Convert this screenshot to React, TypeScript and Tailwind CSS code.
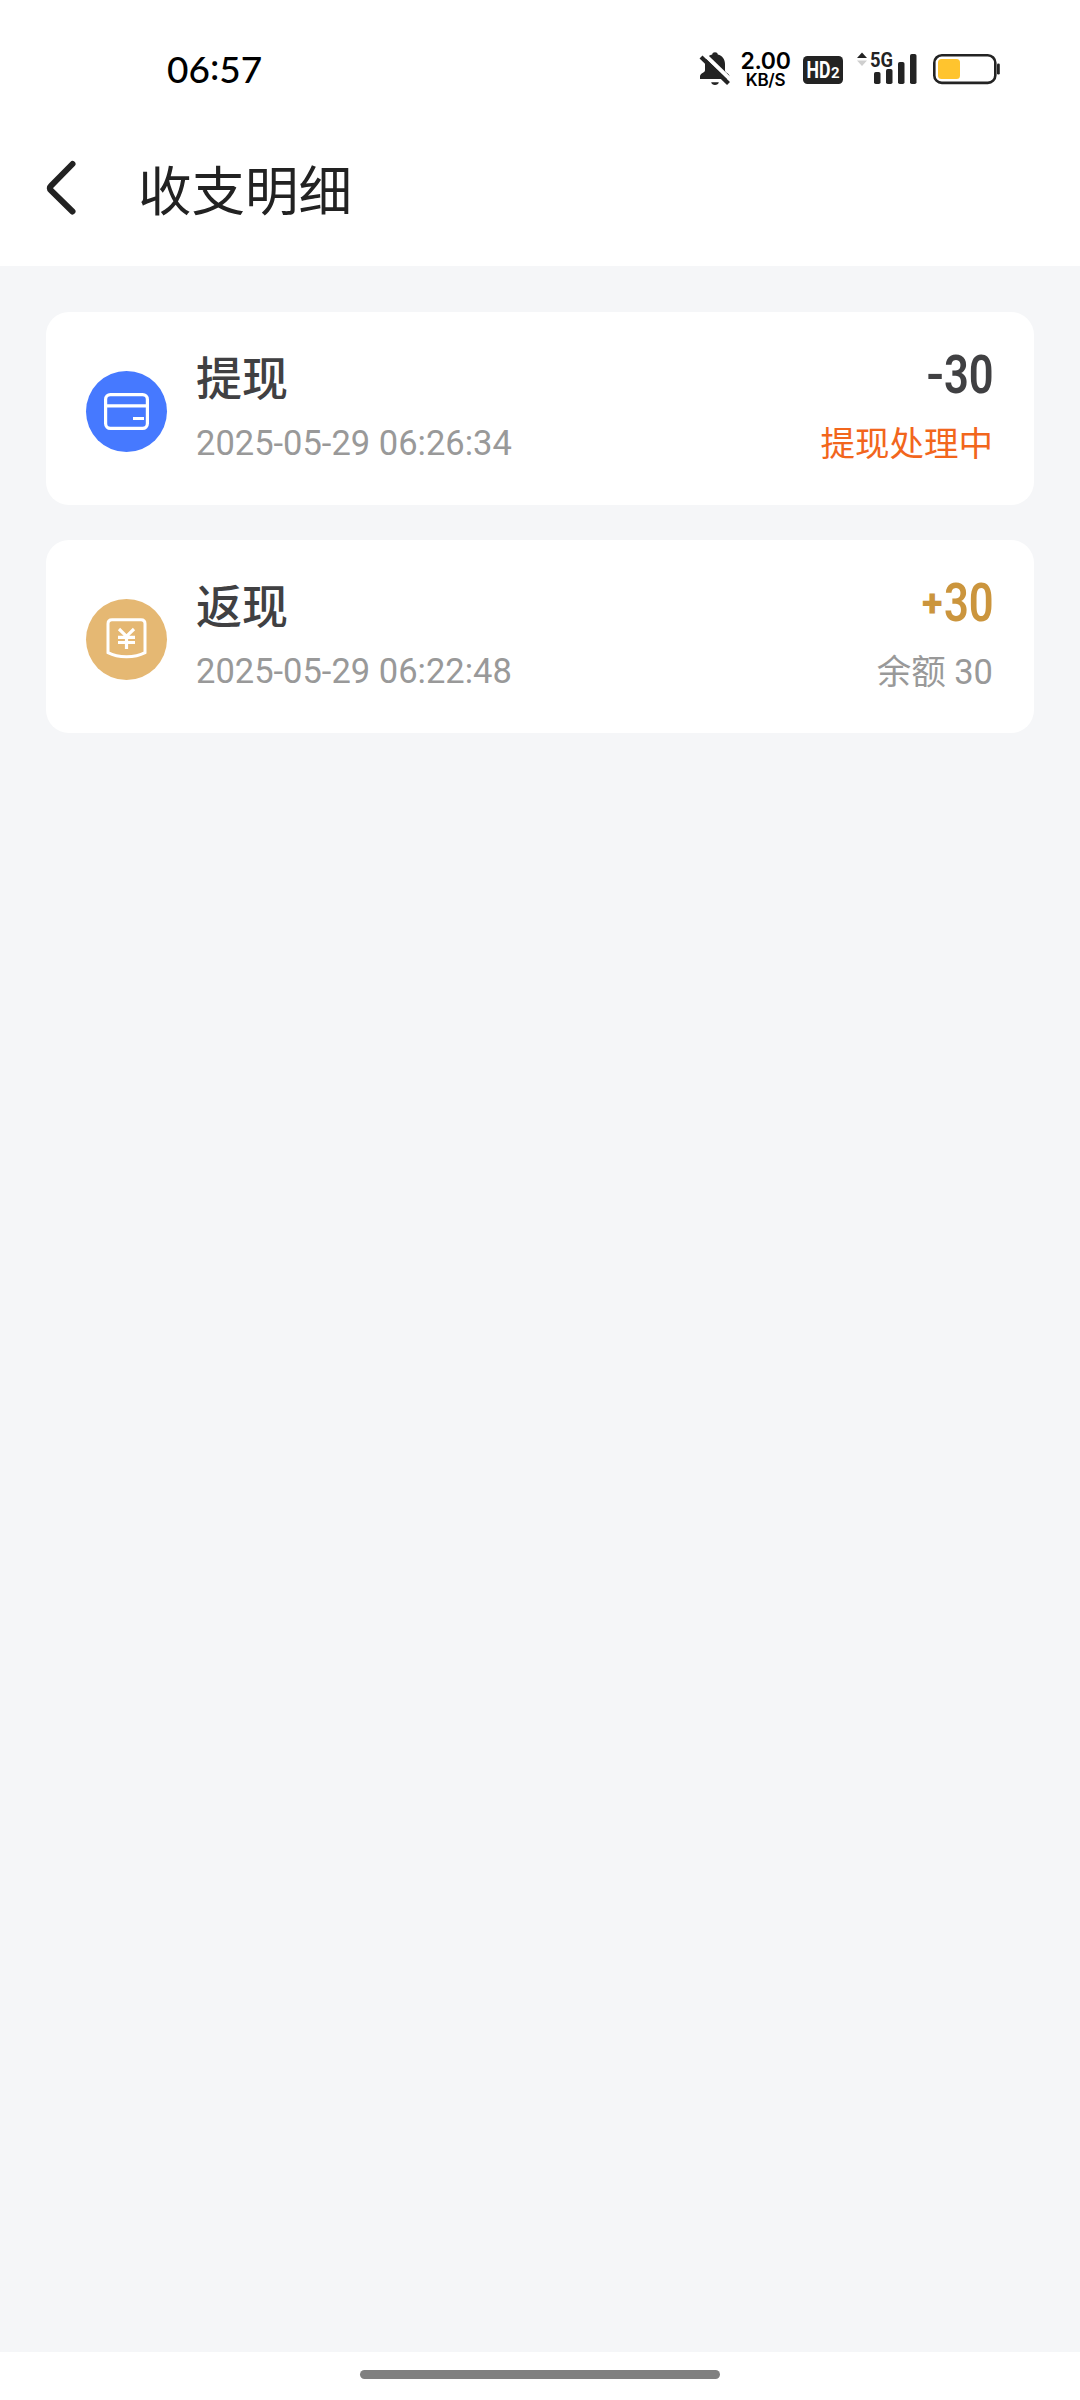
import React from 'react'
import clsx from 'clsx'

interface IRecord {
  type: 'withdraw' | 'cashback'
  title: string
  time: string
  sign: string
  amount: string
  note: string
}

const records: IRecord[] = [
  {
    type: 'withdraw',
    title: '提现',
    time: '2025-05-29 06:26:34',
    sign: '-',
    amount: '30',
    note: '提现处理中',
  },
  {
    type: 'cashback',
    title: '返现',
    time: '2025-05-29 06:22:48',
    sign: '+',
    amount: '30',
    note: '余额 30',
  },
]

const BellOffIcon: React.FC = () => (
  <svg width="34" height="36" viewBox="0 0 34 36" fill="none">
    <path
      d="M16 1.2c1.6 0 2.6.9 2.8 2.2 4.6 1.2 7.2 4.8 7.2 9.6v6.2c0 1.5 1 2 2.8 3.2 1.2.9 1.7 1.8 1.7 3V28H1v-2.6c0-1.2.5-2.1 1.7-3C4.5 21.2 6 20.7 6 19.2V13c0-4.8 2.6-8.4 7.2-9.6.2-1.3 1.2-2.2 2.8-2.2Z"
      fill="#232323"
    />
    <path d="M12.2 31.3h7.6c-.3 1.7-1.8 2.6-3.8 2.6s-3.5-.9-3.8-2.6Z" fill="#232323" />
    <path d="M4.7 2.7 33 30" stroke="#fff" strokeWidth="4" />
    <path d="M2 6 29.5 32.6" stroke="#232323" strokeWidth="4.2" />
  </svg>
)

const SignalIcon: React.FC = () => (
  <svg className="overflow-visible" width="62" height="36" viewBox="0 0 62 36">
    <path d="M5 1.5 10 7H0Z" fill="#232323" />
    <path d="M5 15 0 9.5h10Z" fill="#cfcfcf" />
    <text
      x="13"
      y="16"
      textLength="23"
      lengthAdjust="spacingAndGlyphs"
      className="font-['Roboto',sans-serif] text-[21px] font-bold"
      fill="#232323"
    >
      5G
    </text>
    <rect x="17" y="21" width="6.5" height="12" rx="1.8" fill="#232323" />
    <rect x="29" y="18" width="6.5" height="15" rx="1.8" fill="#232323" />
    <rect x="41" y="11" width="6.5" height="22" rx="1.8" fill="#232323" />
    <rect x="53" y="3" width="6.5" height="30" rx="1.8" fill="#232323" />
  </svg>
)

const HdBadge: React.FC = () => (
  <svg width="40" height="28" viewBox="0 0 40 28">
    <rect width="40" height="28" rx="4.5" fill="#232323" />
    <g className="font-['Roboto',sans-serif] font-bold" fill="#fff">
      <text x="3.5" y="22" textLength="24" lengthAdjust="spacingAndGlyphs" className="text-[23px]">
        HD
      </text>
      <text x="28" y="22" className="text-[15px]">
        2
      </text>
    </g>
  </svg>
)

const BatteryIcon: React.FC = () => (
  <svg width="68" height="32" viewBox="0 0 68 32" fill="none">
    <rect x="1.3" y="2.3" width="61" height="27.6" rx="7.5" stroke="#232323" strokeWidth="2.6" />
    <rect x="5" y="6" width="22" height="20" rx="3.5" fill="#ffc42e" />
    <rect x="64" y="10.5" width="2.8" height="11" rx="1.3" fill="#232323" />
  </svg>
)

const CardIcon: React.FC = () => (
  <svg width="81" height="81" viewBox="0 0 81 81" fill="none" stroke="#fff" strokeWidth="3.2">
    <rect x="19.6" y="23.6" width="41.8" height="33.8" rx="4.8" />
    <path d="M19.6 34.8h41.8M47 47.5h11" />
  </svg>
)

const YuanIcon: React.FC = () => (
  <svg width="81" height="81" viewBox="0 0 81 81" fill="none" stroke="#fff" strokeWidth="3">
    <path d="M26 20.7h29c2.4 0 4 1.6 4 4v28.9c-5 2.7-11.2 4.1-18.5 4.1S27 56.3 22 53.6V24.7c0-2.4 1.6-4 4-4Z" />
    <path d="m33 30 7.5 7.3L48 30M32 38.3h17M32 43.5h17M40.5 37v13" strokeWidth="3.2" />
  </svg>
)

const StatusBar: React.FC = () => (
  <div className="flex h-[138px] items-start pr-[79px] pl-[167px] text-black">
    <div className="mt-[46px] flex font-['Lato',sans-serif] text-[37px] leading-[45px] font-medium">
      06<span className="relative -top-[3px]">:</span>57
    </div>
    <div className="ml-auto flex items-start">
      <div className="mt-[51px]">
        <BellOffIcon />
      </div>
      <div className="mt-[50px] ml-[7px] w-[51px] text-center font-['Inter',sans-serif] font-semibold">
        <div className="text-[23px] leading-[22px] tracking-[-0.3px]">2.00</div>
        <div className="text-[17px] leading-[17px] tracking-[-0.3px]">KB/S</div>
      </div>
      <div className="mt-[56px] ml-[12px]">
        <HdBadge />
      </div>
      <div className="mt-[51px] ml-[14px]">
        <SignalIcon />
      </div>
      <div className="mt-[53px] ml-[14px]">
        <BatteryIcon />
      </div>
    </div>
  </div>
)

const RecordCard: React.FC<{ record: IRecord }> = ({ record }) => {
  const isWithdraw = record.type === 'withdraw'

  return (
    <div className="flex h-[193px] items-start rounded-[23px] bg-white pr-[41px] pl-[40px]">
      <div
        className={clsx(
          'mt-[59px] size-[81px] rounded-full',
          isWithdraw ? 'bg-[#4679ff]' : 'bg-[#e5b873]',
        )}
      >
        {isWithdraw ? <CardIcon /> : <YuanIcon />}
      </div>
      <div className="mt-[37px] ml-[29px]">
        <div className="text-[46px] leading-[60px] font-medium text-[#404042]">{record.title}</div>
        <div className="mt-[13px] text-[34.5px] leading-[42px] text-[#999]">{record.time}</div>
      </div>
      <div className="mt-[33px] ml-auto flex flex-col items-end">
        <div
          className={clsx(
            'mr-[-1px] flex items-center text-[53px] leading-[60px] font-semibold',
            isWithdraw ? 'text-[#404042]' : 'text-[#cb953d]',
          )}
        >
          {isWithdraw ? (
            <span className="mr-[-11px] text-[50px]">{record.sign}</span>
          ) : (
            <span className="mr-[-9px] text-[38px] font-extrabold">{record.sign}</span>
          )}
          <span className="origin-right scale-x-[0.82]">{record.amount}</span>
        </div>
        <div
          className={clsx(
            'mt-[18px] text-[34.5px] leading-[42px]',
            isWithdraw ? 'text-[#f2661c]' : 'text-[#999]',
          )}
        >
          {record.note}
        </div>
      </div>
    </div>
  )
}

const App: React.FC = () => {
  return (
    <div className="flex h-[2400px] w-[1080px] flex-col bg-white font-['Roboto','Noto_Sans_CJK_SC',sans-serif]">
      <StatusBar />
      <header className="flex h-[128px] items-start pl-[46px]">
        <svg className="mt-[21px]" width="32" height="58" viewBox="0 0 32 58" fill="none">
          <path
            d="M26.5 5 5.2 26.7c-1.6 1.6-1.6 3.4 0 5L26.5 52.5"
            stroke="#222"
            strokeWidth="6"
            strokeLinecap="round"
          />
        </svg>
        <h1 className="mt-[15px] ml-[60px] text-[53.5px] leading-[80px] text-[#222]">收支明细</h1>
      </header>
      <main className="flex flex-1 flex-col gap-[35px] bg-[#f5f6f8] px-[46px] pt-[46px]">
        {records.map((record) => (
          <RecordCard key={record.time} record={record} />
        ))}
      </main>
      <footer className="flex h-[48px] justify-center pt-[18px]">
        <div className="h-[9px] w-[360px] rounded-full bg-[#808080]" />
      </footer>
    </div>
  )
}

export default App
